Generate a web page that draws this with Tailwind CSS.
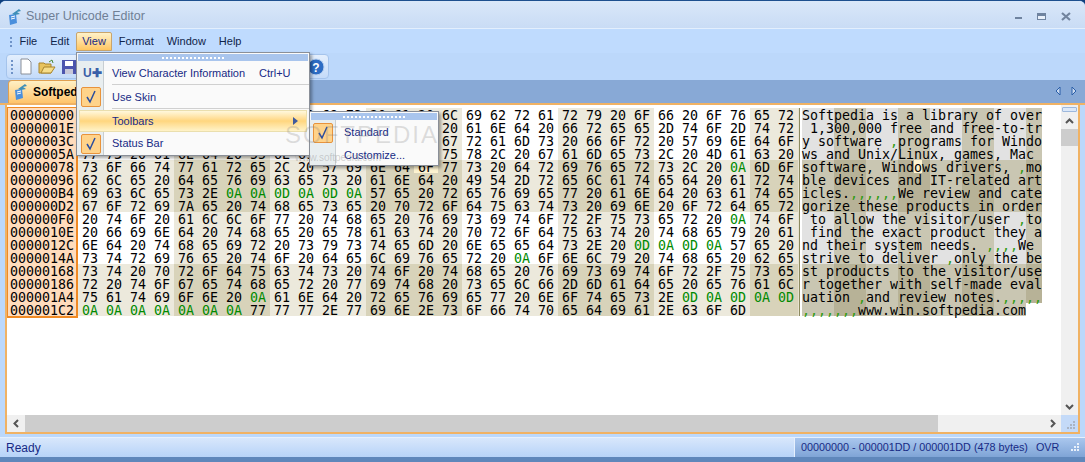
<!DOCTYPE html>
<html lang="en">
<head>
    <meta charset="UTF-8">
    <title>Super Unicode Editor</title>
    <script src="https://cdn.jsdelivr.net/npm/@tailwindcss/browser@4"></script>
</head>
<body class="bg-[#0f3f7d] overflow-hidden">
<div class="relative w-[1085px] h-[462px] flex flex-col bg-[#bcd8fb] font-['Liberation_Sans',sans-serif] text-[11px] text-[#172a85] border-t border-[#1d4f8f] rounded-t-md overflow-hidden">

    <!-- title bar -->
    <div class="h-[28px] shrink-0 flex items-center pt-[4px] pl-[7px] pr-[14px] bg-gradient-to-b from-[#d9e7f9] to-[#c9dcf5] border-b border-[#e3effd]">
        <svg width="16" height="18" viewBox="0 0 16 18"><path d="M2 7l7-1 1 9-7 2z" fill="#4a8fdc"/><path d="M4 9l4-1M4 11l4-1" stroke="#fff"/><path d="M5 6l7-5 2 2-4 1 3 2-5 1z" fill="#3f8fb8"/></svg>
        <span class="ml-[3px] text-[12.5px] text-[#6f7f95]">Super Unicode Editor</span>
        <div class="ml-auto flex items-center gap-[15px]">
            <div class="w-[7px] h-[2px] mt-[3px] bg-[#6f839f]"></div>
            <div class="w-[9px] h-[7px] border border-[#6f839f] border-t-[3px] bg-[#e8f0fa]"></div>
            <svg width="10" height="9" viewBox="0 0 10 9"><path d="M1 1l8 7M9 1l-8 7" stroke="#72849e" stroke-width="2.2"/></svg>
        </div>
    </div>

    <!-- menu bar -->
    <div class="h-[24px] shrink-0 flex items-center pl-[10px] pt-[1px] bg-[#bfdbfe]">
        <div class="w-[3px] h-[10px] border-l-2 border-dotted border-[#6f93c8]"></div>
        <span class="px-[6.5px] text-[#10244a]">File</span>
        <span class="px-[6.5px] text-[#10244a]">Edit</span>
        <span class="px-[5.5px] h-[19px] flex items-center text-[#172a85] border border-[#c9a56c] rounded-t-[2px] bg-gradient-to-b from-[#fff2c8] to-[#ffc65f]">View</span>
        <span class="px-[6.5px] text-[#10244a]">Format</span>
        <span class="px-[6.5px] text-[#10244a]">Window</span>
        <span class="px-[6.5px] text-[#10244a]">Help</span>
    </div>

    <!-- toolbar -->
    <div class="h-[27px] shrink-0 pl-[6px] pt-[1px]">
        <div class="w-[323px] h-[25px] flex items-center pl-[4px] rounded-[4px] border border-[#a5c4ec] bg-gradient-to-b from-[#e4effd] to-[#c4dbf9]">
            <div class="w-[3px] h-[14px] border-l-2 border-dotted border-[#6f93c8]"></div>
            <svg class="ml-[4px]" width="16" height="18" viewBox="0 0 16 18"><path d="M3 1h7l3 3v12H3z" fill="#fff" stroke="#8a8f98"/></svg>
            <svg class="ml-[4px]" width="18" height="16" viewBox="0 0 18 16"><path d="M1 4h5l1 1h6v9H1z" fill="#e8c35e" stroke="#a8842c"/><path d="M3 14l3-6h11l-4 6z" fill="#f6dd8a" stroke="#a8842c"/><path d="M11 3l3-2 1 3" fill="none" stroke="#4a8a3a"/></svg>
            <svg class="ml-[5px]" width="16" height="16" viewBox="0 0 16 16"><rect x="1" y="1" width="14" height="14" fill="#4c55ae"/><rect x="4" y="2" width="8" height="5" fill="#fff"/><rect x="4" y="10" width="8" height="5" fill="#c8c8d8"/></svg>
            <svg class="ml-auto mr-[3px]" width="18" height="18" viewBox="0 0 18 18"><circle cx="9" cy="9" r="8" fill="#2c6cc4" stroke="#b7cfee"/><text x="9" y="13.5" text-anchor="middle" font-family="Liberation Sans" font-weight="700" font-size="12" fill="#fff">?</text></svg>
        </div>
    </div>

    <!-- tab strip -->
    <div class="h-[25px] shrink-0 flex items-end justify-between pl-[8px] pr-[8px] bg-[#88a9d6] border-b-2 border-[#f0b264]">
        <div class="w-[110px] h-[23px] flex items-center pl-[4px] rounded-t-[4px] border border-[#e0a050] border-b-0 bg-gradient-to-b from-[#fff0c4] to-[#ffc46a]">
            <svg width="16" height="18" viewBox="0 0 16 18"><path d="M2 7l7-1 1 9-7 2z" fill="#4a8fdc"/><path d="M4 9l4-1M4 11l4-1" stroke="#fff"/><path d="M5 6l7-5 2 2-4 1 3 2-5 1z" fill="#3f8fb8"/></svg>
            <span class="ml-[4px] font-bold text-[12px] text-black">Softpedia</span>
        </div>
        <div class="flex items-center gap-[10px] mb-[7px]">
            <svg width="6" height="10" viewBox="0 0 6 10"><path d="M5 1L1 5l4 4z" fill="#c9d8ee" stroke="#2a5fa8"/></svg>
            <svg width="6" height="10" viewBox="0 0 6 10"><path d="M1 1l4 4-4 4z" fill="#c9d8ee" stroke="#2a5fa8"/></svg>
        </div>
    </div>

    <!-- editor -->
    <div class="flex-1 min-h-0 flex flex-col mx-[5px] border-x-2 border-[#f0b264] border-b-2 bg-white">
        <div class="flex-1 min-h-0 flex">
            <div class="flex-1 pt-[2px]">
                <div class="w-[71px] h-px bg-[#f08a24]"></div>
                <div id="rows" class="font-['DejaVu_Sans_Mono',monospace] text-[13.3px] leading-[15px] text-black"></div>
                <div class="w-[71px] h-[2px] bg-[#f08a24]"></div>
            </div>
            <div class="w-[17px] shrink-0 flex flex-col pt-[2px] bg-[#f0f0f0]">
                <div class="h-[5px] mx-px rounded-[1px] border border-[#9db8dc] bg-[#dbe8f9]"></div>
                <div class="h-[17px] flex items-center justify-center"><svg width="9" height="6" viewBox="0 0 9 6"><path d="M1 5l3.5-3.5L8 5" fill="none" stroke="#555" stroke-width="2"/></svg></div>
                <div class="h-[17px] bg-[#cdcdcd]"></div>
                <div class="flex-1"></div>
                <div class="h-[17px] flex items-center justify-center"><svg width="9" height="6" viewBox="0 0 9 6"><path d="M1 1l3.5 3.5L8 1" fill="none" stroke="#555" stroke-width="2"/></svg></div>
            </div>
        </div>
        <div class="h-[17px] shrink-0 flex bg-[#f0f0f0]">
            <div class="w-[18px] flex items-center justify-center"><svg width="6" height="9" viewBox="0 0 6 9"><path d="M5 1L1.5 4.5 5 8" fill="none" stroke="#555" stroke-width="2"/></svg></div>
            <div class="w-[913px] bg-[#cdcdcd]"></div>
            <div class="flex-1"></div>
            <div class="w-[17px] flex items-center justify-center"><svg width="6" height="9" viewBox="0 0 6 9"><path d="M1 1l3.5 3.5L1 8" fill="none" stroke="#555" stroke-width="2"/></svg></div>
            <div class="w-[17px] flex items-end justify-end p-[2px] bg-[#c4daf8]"><svg width="9" height="9" viewBox="0 0 9 9" fill="#a9b4c4"><rect x="6" y="0" width="2" height="2"/><rect x="3" y="3" width="2" height="2"/><rect x="6" y="3" width="2" height="2"/><rect x="0" y="6" width="2" height="2"/><rect x="3" y="6" width="2" height="2"/><rect x="6" y="6" width="2" height="2"/></svg></div>
        </div>
    </div>

    <!-- status bar -->
    <div class="h-[25px] shrink-0 flex mt-[3px] border-t border-[#e6f0fd] text-[12px] text-[#172a85] border-b-[5px] border-b-[#5f87bb]">
        <div class="flex-1 flex items-center pl-[6px] bg-gradient-to-b from-[#d8e7fb] to-[#b7d3f8]">Ready</div>
        <div class="w-[291px] flex items-center pl-[6px] pr-[5px] text-[10.8px] whitespace-nowrap bg-gradient-to-b from-[#aac7ee] to-[#7fa4d6] border-l border-[#e6f0fd]">
            <span>00000000 - 000001DD / 000001DD (478 bytes)</span>
            <span class="ml-[8px]">OVR</span>
            <svg class="ml-auto" width="9" height="9" viewBox="0 0 9 9" fill="#e8f0fa"><rect x="6" y="0" width="2" height="2"/><rect x="3" y="3" width="2" height="2"/><rect x="6" y="3" width="2" height="2"/><rect x="0" y="6" width="2" height="2"/><rect x="3" y="6" width="2" height="2"/><rect x="6" y="6" width="2" height="2"/></svg>
        </div>
    </div>

    <!-- view menu -->
    <div class="absolute z-20 left-[76px] top-[51px] w-[234px] h-[104px] bg-[#fafafa] border border-[#8a8f98] shadow-[2px_2px_3px_rgba(0,0,0,0.35)]">
        <div class="h-[7px] mx-[1px] mt-[1px] bg-[#a9c5ed] flex justify-center items-center"><div class="w-[62px] h-[2px] border-t-2 border-dotted border-white"></div></div>
        <div class="absolute left-[0px] top-[8px] bottom-0 w-[27px] bg-[#e8eef0] border-r border-[#c8ced2]"></div>
        <div class="relative h-[23px] pt-px flex items-center">
            <span class="w-[35px] pl-[6px] font-bold text-[12px] text-[#3a60a8]">U✚</span>
            <span>View Character Information</span><span class="ml-[14px]">Ctrl+U</span>
        </div>
        <div class="relative h-px ml-[35px] bg-[#d0d0d0]"></div>
        <div class="relative h-[23px] pt-px flex items-center">
            <span class="w-[20px] h-[20px] ml-[4px] mr-[11px] flex items-center justify-center rounded-[2px] border border-[#e8933c] bg-[#ffd38a]"><svg width="12" height="14" viewBox="0 0 12 14"><path d="M2 7l3 5 5-11" fill="none" stroke="#2a4d9e" stroke-width="1.5"/></svg></span>
            <span>Use Skin</span>
        </div>
        <div class="relative h-px ml-[35px] bg-[#d0d0d0]"></div>
        <div class="relative h-[22px] flex items-center mx-[2px] mt-px pl-[32px] border border-[#eadfae] bg-gradient-to-b from-[#fff8dc] via-[#ffd67e] to-[#fff3c8]">
            <span>Toolbars</span>
            <svg class="ml-auto mr-[8px]" width="5" height="8" viewBox="0 0 5 8"><path d="M0 0l5 4-5 4z" fill="#3f5a9c"/></svg>
        </div>
        <div class="relative h-[22px] pt-px flex items-center">
            <span class="w-[20px] h-[20px] ml-[4px] mr-[11px] flex items-center justify-center rounded-[2px] border border-[#e8933c] bg-[#ffd38a]"><svg width="12" height="14" viewBox="0 0 12 14"><path d="M2 7l3 5 5-11" fill="none" stroke="#2a4d9e" stroke-width="1.5"/></svg></span>
            <span>Status Bar</span>
        </div>
    </div>

    <!-- toolbars submenu -->
    <div class="absolute z-20 left-[309px] top-[110px] w-[130px] h-[55px] bg-[#fafafa] border border-[#8a8f98] shadow-[2px_2px_3px_rgba(0,0,0,0.35)]">
        <div class="h-[7px] mx-[1px] mt-[1px] bg-[#a9c5ed] flex justify-center items-center"><div class="w-[62px] h-[2px] border-t-2 border-dotted border-white"></div></div>
        <div class="absolute left-0 top-[8px] bottom-0 w-[26px] bg-[#e8eef0] border-r border-[#c8ced2]"></div>
        <div class="relative h-[23px] mt-[1px] flex items-center">
            <span class="w-[20px] h-[20px] ml-[3px] mr-[11px] flex items-center justify-center rounded-[2px] border border-[#e8933c] bg-[#ffd38a]"><svg width="12" height="14" viewBox="0 0 12 14"><path d="M2 7l3 5 5-11" fill="none" stroke="#2a4d9e" stroke-width="1.5"/></svg></span>
            <span>Standard</span>
        </div>
        <div class="relative h-[22px] flex items-center pl-[34px]">Customize...</div>
    </div>

    <!-- watermark -->
    <div class="absolute z-30 left-[285px] top-[116px] text-[24px] tracking-[2px] text-[#808080]/25 pointer-events-none">SOFTPEDIA</div>
    <div class="absolute z-30 left-[295px] top-[149px] text-[10px] text-[#808080]/35 pointer-events-none">www.softpedia.com</div>
</div>

<script>
    const lines = [
        'Softpedia is a library of over',
        ' 1,300,000 free and free-to-tr',
        'y software \nprograms for Windo',
        'ws and Unix/Linux, games, Mac ',
        'software, Windows drivers, \nmo',
        'ble devices and IT-related art',
        'icles.\n\n\r\n\r\nWe review and cate',
        'gorize these products in order',
        ' to allow the visitor/user \nto',
        ' find the exact product they a',
        'nd their system needs. \r\n\r\nWe ',
        'strive to deliver \nonly the be',
        'st products to the visitor/use',
        'r together with self-made eval',
        'uation \nand review notes.\r\n\r\n\r',
        '\n\n\n\n\n\n\nwww.win.softpedia.com'
    ];
    const hexBg = ['bg-white', 'bg-[#ece9dc]', 'bg-[#ece9dc]', 'bg-[#d8d3ba]'];
    const textBg = ['bg-[#e2e2e2]', 'bg-[#c9c6b2]', 'bg-[#c9c6b2]', 'bg-[#b7b297]'];
    let html = '';
    lines.forEach((line, r) => {
        const band = Math.floor(r / 4) % 2;
        const offset = (r * 30).toString(16).toUpperCase().padStart(8, '0');
        let hex = '', text = '';
        for (let c = 0; c < 30; c++) {
            const ch = line[c];
            const idx = band * 2 + Math.floor(c / 4) % 2;
            let bg = hexBg[idx], tbg = textBg[idx];
            if (r === 4 && c === 14) { bg = 'bg-[#fdf3d0]'; tbg = 'bg-[#fdf3d0]'; }
            if (ch === undefined) {
                hex += `<span class="w-[24px] ${bg}"></span>`;
                text += `<span class="w-[8px]"></span>`;
                continue;
            }
            const ctrl = ch === '\n' || ch === '\r';
            const code = ch.charCodeAt(0).toString(16).toUpperCase().padStart(2, '0');
            hex += `<span class="w-[24px] pl-[4px] ${bg} ${ctrl ? 'text-[#008a00]' : ''}">${code}</span>`;
            text += `<span class="w-[8px] ${tbg} ${ctrl ? 'text-[#2e9a10]' : ''}">${ctrl ? ',' : (ch === ' ' ? '&nbsp;' : ch)}</span>`;
        }
        // earlier rows stack above later ones so descenders are not painted over
        html += `<div class="relative flex h-[13px] whitespace-pre" style="z-index:${16 - r}">
            <span class="w-[69px] pl-[2px] border-l border-[#f08a24] bg-[#ffdcbc]">${offset}</span>
            <span class="w-[2px] bg-[#f08a24]"></span>
            ${hex}
            <span class="w-px bg-[#e6e2cf]"></span>
            <span class="w-px bg-[#8c8a60]"></span>
            <span class="w-[2px]"></span>
            ${text}
        </div>`;
    });
    document.getElementById('rows').innerHTML = html;
</script>
</body>
</html>
